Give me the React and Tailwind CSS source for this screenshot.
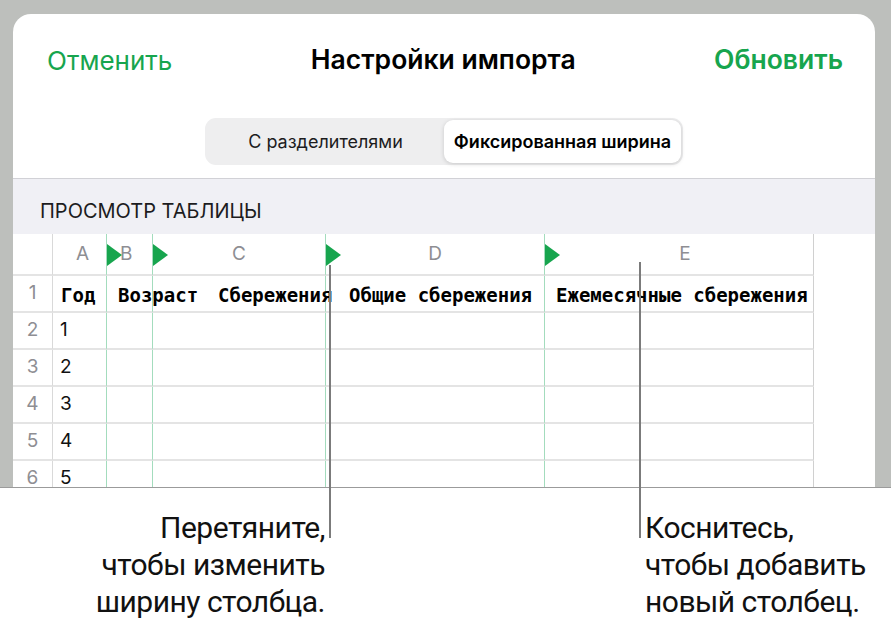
import React from "react";

const green = "#17a54e";

const rows = [
  { n: 1, a: null },
  { n: 2, a: "1" },
  { n: 3, a: "2" },
  { n: 4, a: "3" },
  { n: 5, a: "4" },
  { n: 6, a: "5" },
];

const headerWords = [
  { text: "Год", left: 48 },
  { text: "Возраст", left: 105 },
  { text: "Сбережения", left: 205 },
  { text: "Общие сбережения", left: 336 },
  { text: "Ежемесячные сбережения", left: 543 },
];

function Marker() {
  return (
    <svg width="15" height="22" viewBox="0 0 15 22" className="absolute left-0 top-[10px]">
      <polygon points="0,0 15,11 0,22" fill={green} />
    </svg>
  );
}

function Row({ row }) {
  const cell = "h-[37px] border-b-2 border-[#e4e4e4]";
  return (
    <div className="relative grid grid-cols-[40px_54px_46px_173px_219px_269px_1fr]">
      <div className={`${cell} border-r border-r-[#d9d9d9] flex items-center justify-center text-[19px] text-[#8e8e93]`}>{row.n}</div>
      <div className={`${cell} border-r border-r-[#a3dcbd] flex items-center pl-[7px] text-[19px] text-[#111]`}>{row.a}</div>
      <div className={`${cell} border-r border-r-[#a3dcbd]`} />
      <div className={`${cell} border-r border-r-[#a3dcbd]`} />
      <div className={`${cell} border-r border-r-[#a3dcbd]`} />
      <div className={`${cell} border-r border-r-[#d0d0d0]`} />
      <div className="h-[37px]" />
      {row.n === 1 &&
        headerWords.map((w) => (
          <span
            key={w.text}
            className="absolute top-[1px] h-[37px] flex items-center whitespace-pre font-['DejaVu_Sans_Mono',monospace] font-bold text-[19px] text-black"
            style={{ left: w.left }}
          >
            {w.text}
          </span>
        ))}
    </div>
  );
}

export default function App() {
  return (
    <div className="relative w-[891px] h-[620px] overflow-hidden bg-white font-['Inter',sans-serif]">
      <div className="h-[488px] bg-[#bdbfbc] pt-[14px] pl-[13px] pr-[16px] border-b border-[#9b9b9b]">
        <div className="h-full bg-white rounded-t-[18px] overflow-hidden">
          <div className="h-[92px] flex items-center justify-between pl-[34px] pr-[32px]">
            <span className="text-[26px] text-[#17a54e]">Отменить</span>
            <span className="text-[26.5px] font-semibold text-black">Настройки импорта</span>
            <span className="text-[26.5px] font-semibold text-[#17a54e]">Обновить</span>
          </div>

          <div className="mt-[12px] mx-auto w-[478px] h-[47px] rounded-[11px] bg-[#eeeeef] p-[2px] grid grid-cols-2">
            <div className="flex items-center justify-center text-[18px] text-[#1c1c1e]">С разделителями</div>
            <div className="flex items-center justify-center rounded-[9px] bg-white shadow-[0_1px_4px_rgba(0,0,0,0.16)] text-[18px] font-semibold text-black">
              Фиксированная ширина
            </div>
          </div>

          <div className="mt-[13px] h-[56px] bg-[#f0f0f5] border-t border-[#d1d1d6] flex items-center pt-[8px] pl-[27px] text-[20px] text-[#1c1c1e]">
            ПРОСМОТР ТАБЛИЦЫ
          </div>

          <div className="grid grid-cols-[40px_54px_46px_173px_219px_269px_1fr] text-[19px] text-[#8e8e93]">
            <div className="h-[42px] border-b-2 border-[#e4e4e4] border-r border-r-[#d9d9d9]" />
            <div className="h-[42px] border-b-2 border-[#e4e4e4] border-r border-r-[#a3dcbd] flex items-center justify-center pl-[6px]">A</div>
            <div className="relative h-[42px] border-b-2 border-[#e4e4e4] border-r border-r-[#a3dcbd] flex items-center pl-[13px]">
              <Marker />B
            </div>
            <div className="relative h-[42px] border-b-2 border-[#e4e4e4] border-r border-r-[#a3dcbd] flex items-center justify-center">
              <Marker />C
            </div>
            <div className="relative h-[42px] border-b-2 border-[#e4e4e4] border-r border-r-[#a3dcbd] flex items-center justify-center">
              <Marker />D
            </div>
            <div className="relative h-[42px] border-b-2 border-[#e4e4e4] border-r border-r-[#d0d0d0] flex items-center justify-center pl-[12px]">
              <Marker />E
            </div>
            <div className="h-[42px]" />
          </div>

          {rows.map((r) => (
            <Row key={r.n} row={r} />
          ))}
        </div>
      </div>

      <div className="flex pt-[21px] font-['Roboto',sans-serif] text-[30px] tracking-[-0.5px] leading-[37px] text-[#111]">
        <div className="w-[325px] text-right">
          Перетяните,
          <br />
          чтобы изменить
          <br />
          ширину столбца.
        </div>
        <div className="ml-[320px]">
          Коснитесь,
          <br />
          чтобы добавить
          <br />
          новый столбец.
        </div>
      </div>

      <div className="absolute left-[329px] top-[265px] h-[273px] w-[2px] bg-[#7b7b7b]" />
      <div className="absolute left-[639px] top-[262px] h-[276px] w-[2px] bg-[#7b7b7b]" />
    </div>
  );
}
